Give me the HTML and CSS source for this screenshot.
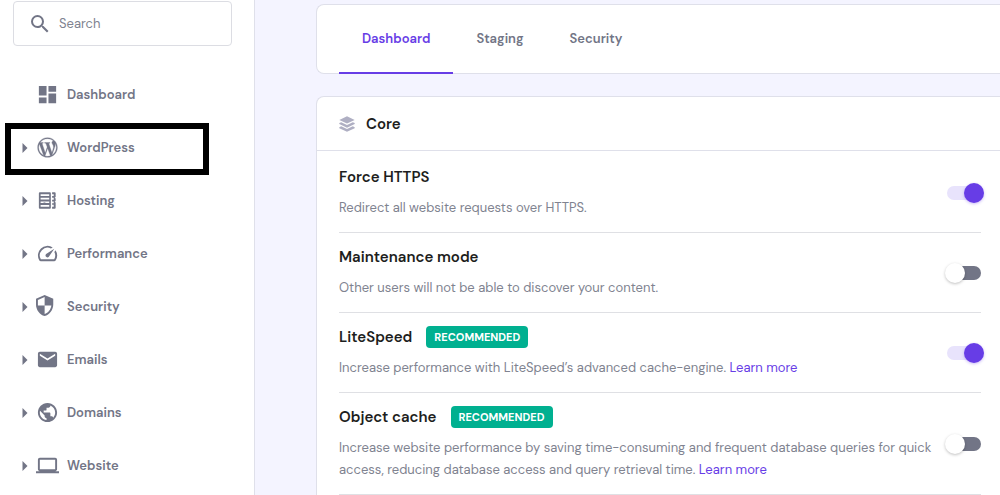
FILE: index.html
```html
<!DOCTYPE html>
<html lang="en">
<head>
<meta charset="utf-8">
<meta name="viewport" content="width=device-width, initial-scale=1">
<title>WordPress – Dashboard</title>
<link rel="stylesheet" href="styles.css">
</head>
<body>
<div class="app">
  <aside class="sidebar">
    <label class="search">
      <svg class="search-icon" viewBox="0 0 24 24" aria-hidden="true"><path d="M15.5 14h-.79l-.28-.27A6.47 6.47 0 0 0 16 9.5 6.5 6.5 0 1 0 9.5 16c1.61 0 3.09-.59 4.23-1.57l.27.28v.79l5 4.99L20.49 19l-4.99-5zm-6 0C7.01 14 5 11.99 5 9.5S7.01 5 9.5 5 14 7.01 14 9.5 11.99 14 9.5 14z"/></svg>
      <input class="search-input" type="text" placeholder="Search" aria-label="Search">
    </label>
    <nav class="menu" aria-label="Main">
      <a class="menu-item" href="#dashboard">
        <span class="caret-space"></span>
        <svg class="menu-icon" viewBox="0 0 24 24" aria-hidden="true"><path d="M3 13h8V3H3v10zm0 8h8v-6H3v6zm10 0h8V11h-8v10zm0-18v6h8V3h-8z"/></svg>
        <span>Dashboard</span>
      </a>
      <button class="menu-item highlighted" type="button" aria-expanded="false">
        <svg class="caret" viewBox="0 0 5 10" aria-hidden="true"><path d="M0 0l5 5-5 5z"/></svg>
        <svg class="menu-icon" viewBox="-2 -2 28 28" aria-hidden="true"><path stroke="#727586" stroke-width=".4" d="M21.469 6.825c.84 1.537 1.318 3.3 1.318 5.175 0 3.979-2.156 7.456-5.363 9.325l3.295-9.527c.615-1.54.82-2.771.82-3.864 0-.405-.026-.78-.07-1.11m-7.981.105c.647-.03 1.232-.105 1.232-.105.582-.075.514-.93-.067-.899 0 0-1.755.135-2.88.135-1.064 0-2.85-.15-2.85-.15-.585-.03-.661.855-.075.885 0 0 .54.061 1.125.09l1.68 4.605-2.37 7.08L5.354 6.9c.649-.03 1.234-.1 1.234-.1.585-.075.516-.93-.065-.896 0 0-1.746.138-2.874.138-.2 0-.438-.008-.69-.015C4.911 3.15 8.235 1.215 12 1.215c2.809 0 5.365 1.072 7.286 2.833-.046-.003-.091-.009-.141-.009-1.06 0-1.812.923-1.812 1.914 0 .89.513 1.643 1.06 2.531.411.72.89 1.643.89 2.977 0 .915-.354 1.994-.821 3.479l-1.075 3.585-3.9-11.61zM12 22.784c-1.059 0-2.081-.153-3.048-.437l3.237-9.406 3.315 9.087c.024.053.05.101.078.149-1.12.393-2.325.609-3.582.609M1.211 12c0-1.564.336-3.05.935-4.39L7.29 21.709C3.694 19.96 1.212 16.271 1.211 12M12 0C5.385 0 0 5.385 0 12s5.385 12 12 12 12-5.385 12-12S18.615 0 12 0"/></svg>
        <span>WordPress</span>
      </button>
      <button class="menu-item" type="button" aria-expanded="false">
        <svg class="caret" viewBox="0 0 5 10" aria-hidden="true"><path d="M0 0l5 5-5 5z"/></svg>
        <svg class="menu-icon" viewBox="0 0 24 24" aria-hidden="true"><path fill-rule="evenodd" d="M4 3.500h10.500a1 1 0 0 1 1 1v15a1 1 0 0 1-1 1H4a1 1 0 0 1-1-1v-15a1 1 0 0 1 1-1zm.8 1.900v1.800h9V5.400zm0 3.800v1.700h9V9.200zm0 3.800v1.700h3V14h2v.700h4V13zm0 3.800v1.700h9v-1.700zM16.800 3.500h2.700a1 1 0 0 1 1 1v3.800l-1 .8 1 .8v2.600l-1 .8 1 .8v5.400a1 1 0 0 1-1 1h-2.700v-1.900h1.700v-2.100h-1.700v-1.700h1.700V13h-1.700v-1.900h1.700V9.200h-1.700V7.300h1.700V5.400h-1.700z"/></svg>
        <span>Hosting</span>
      </button>
      <button class="menu-item" type="button" aria-expanded="false">
        <svg class="caret" viewBox="0 0 5 10" aria-hidden="true"><path d="M0 0l5 5-5 5z"/></svg>
        <svg class="menu-icon" viewBox="0 0 24 24" aria-hidden="true"><path d="M20.380 8.570l-1.230 1.850a8 8 0 0 1-.22 7.580H5.070A8 8 0 0 1 15.580 6.850l1.850-1.230A10 10 0 0 0 3.350 19a2 2 0 0 0 1.720 1h13.850a2 2 0 0 0 1.740-1 10 10 0 0 0-.27-10.440zM10.590 15.410a2 2 0 0 0 2.830 0l5.660-8.490-8.490 5.660a2 2 0 0 0 0 2.830z"/></svg>
        <span>Performance</span>
      </button>
      <button class="menu-item" type="button" aria-expanded="false">
        <svg class="caret" viewBox="0 0 5 10" aria-hidden="true"><path d="M0 0l5 5-5 5z"/></svg>
        <svg class="menu-icon" viewBox="3 1 24 24" aria-hidden="true"><path d="M12 1L3 5v6c0 5.550 3.840 10.740 9 12 5.160-1.260 9-6.450 9-12V5l-9-4zm0 10.990h7c-.53 4.120-3.280 7.790-7 8.940V12H5V6.300l7-3.110v8.800z"/></svg>
        <span>Security</span>
      </button>
      <button class="menu-item" type="button" aria-expanded="false">
        <svg class="caret" viewBox="0 0 5 10" aria-hidden="true"><path d="M0 0l5 5-5 5z"/></svg>
        <svg class="menu-icon" viewBox="0 0 24 24" aria-hidden="true"><path d="M20 4H4c-1.100 0-1.990.9-1.990 2L2 18c0 1.100.9 2 2 2h16c1.100 0 2-.9 2-2V6c0-1.100-.9-2-2-2zm0 4l-8 5-8-5V6l8 5 8-5v2z"/></svg>
        <span>Emails</span>
      </button>
      <button class="menu-item" type="button" aria-expanded="false">
        <svg class="caret" viewBox="0 0 5 10" aria-hidden="true"><path d="M0 0l5 5-5 5z"/></svg>
        <svg class="menu-icon" viewBox="0 0 24 24" aria-hidden="true"><path d="M12 2C6.480 2 2 6.480 2 12s4.480 10 10 10 10-4.480 10-10S17.520 2 12 2zm-1 17.930c-3.950-.49-7-3.850-7-7.930 0-.62.08-1.210.21-1.790L9 15v1c0 1.100.9 2 2 2v1.930zm6.900-2.540c-.26-.81-1-1.390-1.900-1.390h-1v-3c0-.55-.45-1-1-1H8v-2h2c.55 0 1-.45 1-1V7h2c1.100 0 2-.9 2-2v-.41c2.930 1.190 5 4.060 5 7.410 0 2.080-.8 3.970-2.100 5.390z"/></svg>
        <span>Domains</span>
      </button>
      <button class="menu-item" type="button" aria-expanded="false">
        <svg class="caret" viewBox="0 0 5 10" aria-hidden="true"><path d="M0 0l5 5-5 5z"/></svg>
        <svg class="menu-icon" viewBox="0 0 24 24" aria-hidden="true"><path d="M20 18c1.100 0 1.990-.9 1.990-2L22 6c0-1.100-.9-2-2-2H4c-1.100 0-2 .9-2 2v10c0 1.100.9 2 2 2H0v2h24v-2h-4zM4 6h16v10H4V6z"/></svg>
        <span>Website</span>
      </button>
    </nav>
  </aside>

  <main class="content">
    <nav class="panel tabs" aria-label="WordPress sections">
      <a class="tab active" href="#dashboard" aria-current="page">Dashboard</a>
      <a class="tab" href="#staging">Staging</a>
      <a class="tab" href="#security">Security</a>
    </nav>

    <section class="panel">
      <header class="panel-header">
        <svg class="layers" viewBox="0 0 16 16" aria-hidden="true"><path d="M8 .3l7.700 3.600L8 7.500.3 3.900zM.3 7.100l1.900-.9L8 8.900l5.800-2.700 1.900.9v1L8 11.700.3 8.100zM.3 11.200l1.900-.9L8 13l5.800-2.700 1.900.9v1L8 15.800.3 12.200z"/></svg>
        <h2 class="title">Core</h2>
      </header>
      <div class="settings">
        <div class="setting">
          <div class="setting-text">
            <h3 class="title" id="https">Force HTTPS</h3>
            <p class="description">Redirect all website requests over HTTPS.</p>
          </div>
          <input class="switch" type="checkbox" role="switch" aria-labelledby="https" checked>
        </div>
        <div class="setting">
          <div class="setting-text">
            <h3 class="title" id="maintenance">Maintenance mode</h3>
            <p class="description">Other users will not be able to discover your content.</p>
          </div>
          <input class="switch" type="checkbox" role="switch" aria-labelledby="maintenance">
        </div>
        <div class="setting">
          <div class="setting-text">
            <div class="title-line"><h3 class="title" id="litespeed">LiteSpeed</h3><span class="badge">RECOMMENDED</span></div>
            <p class="description">Increase performance with LiteSpeed’s advanced cache-engine. <a class="link" href="#litespeed">Learn more</a></p>
          </div>
          <input class="switch" type="checkbox" role="switch" aria-labelledby="litespeed" checked>
        </div>
        <div class="setting">
          <div class="setting-text">
            <div class="title-line"><h3 class="title" id="cache">Object cache</h3><span class="badge">RECOMMENDED</span></div>
            <p class="description">Increase website performance by saving time-consuming and frequent database queries for quick access, reducing database access and query retrieval time. <a class="link" href="#cache">Learn more</a></p>
          </div>
          <input class="switch" type="checkbox" role="switch" aria-labelledby="cache">
        </div>
      </div>
    </section>
  </main>
</div>
</body>
</html>
```
FILE: styles.css
```css
* {
  box-sizing: border-box;
}

html {
  scrollbar-width: none;
}

body {
  margin: 0;
  background: #f4f4ff;
  color: #1d1e20;
  font-family: "DM Sans", Inter, sans-serif;
  font-size: 13px;
  line-height: 22px;
}

.app {
  display: flex;
  min-height: 100vh;
}

.sidebar {
  flex: 0 0 255px;
  padding-top: 1px;
  background: #fff;
  border-right: 1px solid #dfe0ea;
}

.search {
  display: flex;
  align-items: center;
  gap: 7px;
  height: 45px;
  margin: 0 22px 0 13px;
  padding: 0 14px;
  border: 1px solid #dcdde3;
  border-radius: 4px;
}

.search-icon {
  flex: none;
  width: 24px;
  height: 24px;
  fill: #727586;
}

.search-input {
  flex: 1;
  min-width: 0;
  padding: 0;
  border: 0;
  outline: 0;
  background: none;
  color: #1d1e20;
  font: inherit;
}

.search-input::placeholder {
  color: #808390;
  opacity: 1;
}

.menu {
  display: flex;
  flex-direction: column;
  margin-top: 22px;
}

.menu-item {
  display: flex;
  align-items: center;
  gap: 8px;
  height: 53px;
  padding: 0 23px 0 22px;
  border: 0;
  background: none;
  color: #727586;
  font: inherit;
  font-weight: 600;
  text-align: left;
  text-decoration: none;
}

.highlighted {
  position: relative;
}

.highlighted::after {
  content: "";
  position: absolute;
  inset: 2px 45px -1px 5px;
  border: 6px solid #000;
}

.caret,
.caret-space {
  flex: none;
  width: 6px;
  height: 10px;
  fill: #727586;
}

.menu-icon {
  flex: none;
  width: 23px;
  height: 23px;
  fill: #727586;
}

.content {
  flex: 1;
  min-width: 0;
  padding: 4px 0 24px 61px;
}

.panel {
  margin: 0;
  background: #fff;
  border: 1px solid #dfe0ea;
  border-right: 0;
  border-radius: 8px 0 0 8px;
}

.tabs {
  display: flex;
  height: 70px;
  margin-bottom: 22px;
  padding-left: 22px;
}

.tab {
  display: flex;
  align-items: center;
  margin-bottom: -1px;
  padding: 0 23px;
  border-bottom: 2px solid transparent;
  color: #727586;
  font-weight: 600;
  text-decoration: none;
}

.tab.active {
  border-color: #673de6;
  color: #673de6;
}

.panel-header {
  display: flex;
  align-items: center;
  gap: 11px;
  height: 54px;
  padding: 0 22px;
  border-bottom: 1px solid #dfe0ea;
}

.layers {
  width: 16px;
  height: 16px;
  fill: #afafc3;
}

.title {
  margin: 0;
  font-size: 15px;
  font-weight: 600;
  line-height: 22px;
}

.settings {
  padding: 2px 19px 24px 22px;
}

.setting {
  display: flex;
  align-items: center;
  justify-content: space-between;
  padding: 13px 0;
  border-bottom: 1px solid #dfe0e4;
}

.setting-text {
  display: flex;
  flex-direction: column;
  gap: 9px;
}

.title-line {
  display: flex;
  align-items: center;
  gap: 14px;
}

.badge {
  padding: 0 8px;
  border-radius: 4px;
  background: #00b090;
  color: #fff;
  font-size: 11px;
  font-weight: 700;
}

.description {
  margin: 0;
  color: #808390;
}

.link {
  color: #673de6;
  text-decoration: none;
}

.switch {
  appearance: none;
  position: relative;
  flex: none;
  width: 34px;
  height: 14px;
  margin: 0;
  border-radius: 7px;
  background: #727586;
}

.switch::before {
  content: "";
  position: absolute;
  top: -3px;
  left: -2px;
  width: 20px;
  height: 20px;
  border-radius: 50%;
  background: #fff;
  box-shadow: 0 1px 3px rgba(0, 0, 0, 0.25);
}

.switch:checked {
  background: #e8e3fc;
}

.switch:checked::before {
  left: 17px;
  background: #673de6;
  box-shadow: 0 1px 3px rgba(103, 61, 230, 0.35);
}
```
